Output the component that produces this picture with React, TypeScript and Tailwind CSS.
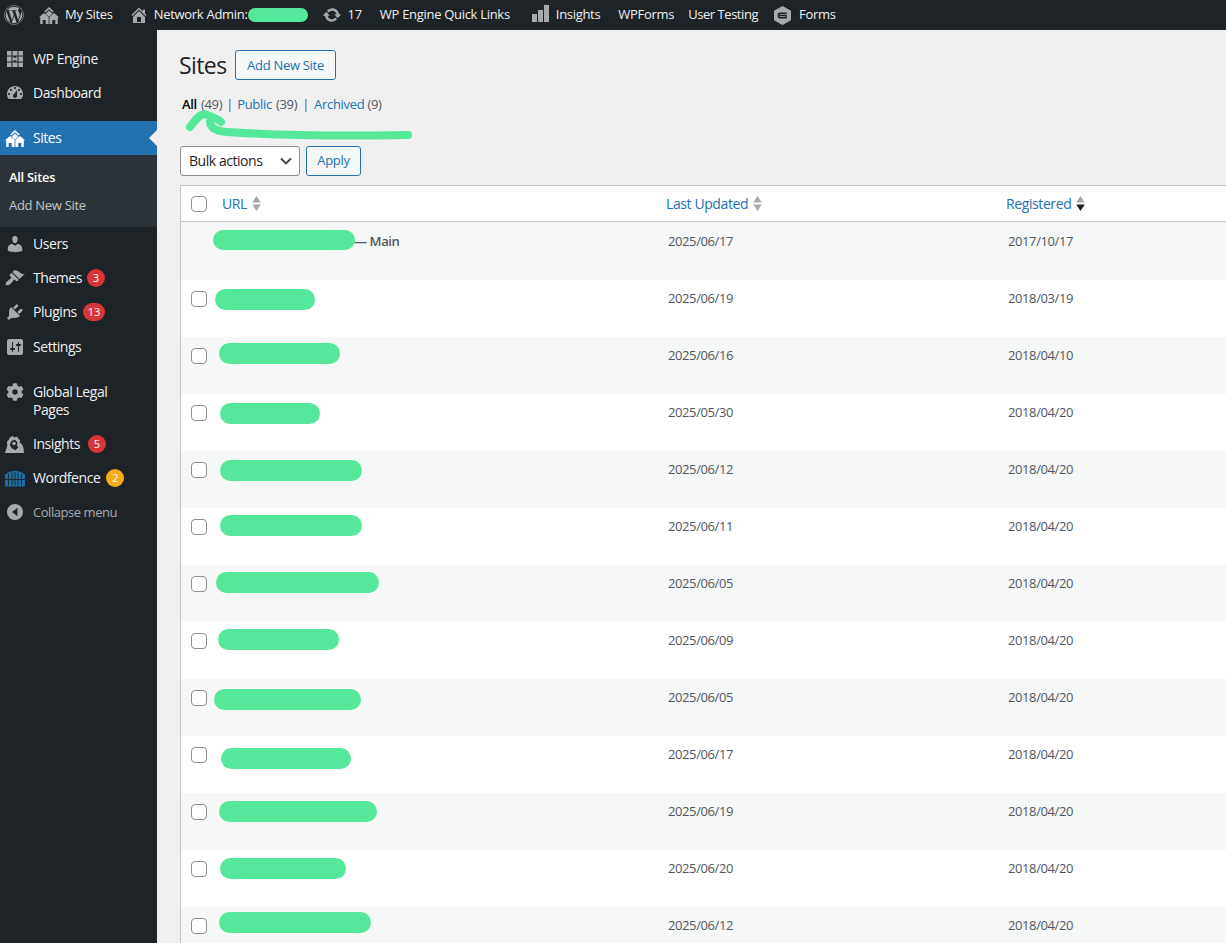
import { FaCog, FaWordpress } from "react-icons/fa";
import type { ReactNode } from "react";

const font = "font-['Open_Sans','Noto_Sans',sans-serif]";

function Dash({ d, className = "h-5 w-5" }: { d: string; className?: string }) {
  return (
    <svg viewBox="0 0 20 20" className={className} fill="currentColor">
      <path d={d} fillRule="evenodd" />
    </svg>
  );
}

const homePath = "M16 8.5l1.530 1.530-1.060 1.060L10 4.620l-6.470 6.470-1.060-1.060L10 2.500l4 4v-2h2v4zm-6-2.460l6 5.990V18H4v-5.970zM12 17v-5H8v5h4z";
const usersPath = "M10 9.250c-2.270 0-2.730-3.440-2.730-3.440C7 4.020 7.820 2 9.970 2c2.160 0 2.980 2.020 2.710 3.810 0 0-.410 3.440-2.680 3.440zm0 2.570L12.720 10c2.390 0 4.520 2.330 4.520 4.530v2.490s-3.650 1.130-7.240 1.130c-3.650 0-7.240-1.130-7.240-1.130v-2.490c0-2.250 1.940-4.480 4.470-4.480z";
const brushPath = "M14.480 11.060L7.410 3.990l1.500-1.500c.5-.56 2.300-.47 3.510.32 1.210.8 1.430 1.280 2.910 2.100 1.180.64 2.450 1.260 4.450.85zm-.71.71L6.700 4.700 4.930 6.470c-.39.39-.39 1.020 0 1.410l1.060 1.060c.39.39.39 1.030 0 1.420-.6.6-1.430 1.110-2.210 1.690-.35.26-.7.53-1.010.84C1.430 13.230 0 16 1 17c.99 1 3.860-.34 5.200-1.790.31-.31.58-.65.84-1 .58-.79 1.090-1.620 1.690-2.220.39-.39 1.020-.39 1.410 0l1.060 1.060c.39.39 1.020.39 1.410 0z";
const plugPath = "M13.110 4.360L9.870 7.600 8 5.730l3.240-3.240c.35-.34 1.050-.2 1.560.32.52.51.66 1.210.31 1.550zm-8 1.770l.91-1.120 9.010 9.010-1.190.84c-.71.71-2.630 1.160-3.820 1.160H6.140L4.900 17.260c-.59.59-1.540.59-2.120 0-.59-.58-.59-1.530 0-2.120l1.240-1.240v-3.880c0-1.130.4-3.190 1.090-3.890zm7.260 3.970l3.240-3.240c.34-.35 1.040-.21 1.550.31.52.51.66 1.210.31 1.550l-3.240 3.250z";
const dashboardPath = "M3.760 16h12.480c1.100-1.370 1.760-3.110 1.760-5 0-4.420-3.580-8-8-8s-8 3.580-8 8c0 1.890.66 3.630 1.760 5zM10 4c.55 0 1 .45 1 1s-.45 1-1 1-1-.45-1-1 .45-1 1-1zM6 6c.55 0 1 .45 1 1s-.45 1-1 1-1-.45-1-1 .45-1 1-1zm8 0c.55 0 1 .45 1 1s-.45 1-1 1-1-.45-1-1 .45-1 1-1zm-5.370 5.550L12 7v6c0 1.100-.9 2-2 2s-2-.9-2-2c0-.57.24-1.080.63-1.450zM4 10c.55 0 1 .45 1 1s-.45 1-1 1-1-.45-1-1 .45-1 1-1zm12 0c.55 0 1 .45 1 1s-.45 1-1 1-1-.45-1-1 .45-1 1-1z";
const settingsPath = "M18 16V4c0-1.100-.9-2-2-2H4c-1.100 0-2 .9-2 2v12c0 1.100.9 2 2 2h12c1.100 0 2-.9 2-2zM8 11h1c.55 0 1 .45 1 1s-.45 1-1 1H8v1.500c0 .28-.22.5-.5.5s-.5-.22-.5-.5V13H6c-.55 0-1-.45-1-1s.45-1 1-1h1V5.500c0-.28.22-.5.5-.5s.5.22.5.5V11zm5-2h-1c-.55 0-1-.45-1-1s.45-1 1-1h1V5.500c0-.28.22-.5.5-.5s.5.22.5.5V7h1c.55 0 1 .45 1 1s-.45 1-1 1h-1v5.500c0 .28-.22.5-.5.5s-.5-.22-.5-.5V9z";
const updatePath = "M10.200 3.280c3.530 0 6.430 2.610 6.920 6h2.080l-3.500 4-3.500-4h2.320c-.45-1.970-2.210-3.440-4.320-3.440-1.450 0-2.730.71-3.540 1.780L4.950 5.660C6.230 4.200 8.110 3.280 10.200 3.280zm-.4 13.440c-3.520 0-6.430-2.610-6.920-6H.8l3.500-4c1.170 1.330 2.330 2.670 3.500 4H5.480c.45 1.970 2.210 3.440 4.320 3.440 1.450 0 2.730-.71 3.540-1.780l1.710 1.950c-1.280 1.460-3.150 2.390-5.250 2.390z";

function SitesIcon({ className, cut }: { className: string; cut: string }) {
  return (
    <svg viewBox="0 0 20 17" className={className} fill="currentColor">
      <path d="M10 0 14.800 4.400 13.700 5.500 10 2.200 6.300 5.500 5.200 4.400Z" />
      <path d="M10 3.600 13.400 6.700 10 9.700 6.600 6.700Z" />
      <path d="M5 6 9.600 10 9.600 17H1.200V10.500L0 10.300Z" />
      <path d="M15 6 20 10.300 18.800 10.500V17H10.400V10Z" />
      <rect x="3.700" y="13" width="3" height="4" fill={cut} />
      <rect x="13.300" y="13" width="3" height="4" fill={cut} />
    </svg>
  );
}

function BarsIcon() {
  return (
    <svg viewBox="0 0 17 17" className="mb-[3px] h-[17px] w-[17px] text-[#a7aaad]" fill="currentColor">
      <rect x="0" y="9" width="5" height="8" />
      <rect x="6" y="5" width="5" height="12" />
      <rect x="12" y="0" width="5" height="17" />
    </svg>
  );
}

function FormsIcon() {
  return (
    <svg viewBox="0 0 18 20" className="h-[19px] w-[17px] text-[#a7aaad]" fill="currentColor">
      <path d="M9 0 18 5V15L9 20 0 15V5Z" />
      <path d="M5.500 6.800H13.500V8.400H6V9.300H13.500V13.200H5.500L4 11.800V8.200ZM6 10.800V11.600H12V10.800Z" fill="#1d2327" fillRule="evenodd" />
    </svg>
  );
}

function GridIcon() {
  return (
    <svg viewBox="0 0 16 16" className="h-4 w-4" fill="currentColor">
      <rect x="0" y="0" width="4.500" height="4.500" />
      <rect x="5.500" y="0" width="5" height="4.500" />
      <rect x="11.500" y="0" width="4.500" height="4.500" />
      <rect x="0" y="5.500" width="4.500" height="5" />
      <path d="M5.500 5.500h1.200v1.200h2.600V5.500h1.200v5H9.300V9.300H6.700v1.200H5.500Z" />
      <rect x="11.500" y="5.500" width="4.500" height="5" />
      <rect x="0" y="11.500" width="4.500" height="4.500" />
      <rect x="5.500" y="11.500" width="5" height="4.500" />
      <rect x="11.500" y="11.500" width="4.500" height="4.500" />
    </svg>
  );
}

function MonsterIcon() {
  return (
    <svg viewBox="0 0 20 20" className="h-[19px] w-[19px]" fill="currentColor">
      <path d="M8 1 10 2.500 13 1.500 14 4 16 5.500 15.500 8 18 10 19.500 14 20 19H0L1.500 14 2.500 11 2 7 4 5 5 2.500Z" />
      <path d="M7 6 10.500 5 13 7.500 12.500 11 14 13 11 16 7 14 5 10Z" fill="#1d2327" />
      <circle cx="9.500" cy="9" r="1.800" />
      <path d="M14 12.500 17 12 18 15 15 16Z" />
    </svg>
  );
}

function FenceIcon() {
  return (
    <svg viewBox="0 0 20 16" className="h-[17px] w-5 text-[#1d6d9e]" fill="currentColor">
      <path d="M0 4 4 1.500 10 0 16 1.500 20 4V16H0Z" />
      <path d="M3.500 3.500V15M7 2V15M10 1.500V15M13 2V15M16.500 3.500V15M0 9H20" stroke="#1d2327" strokeWidth="0.900" fill="none" />
    </svg>
  );
}

function CollapseIcon() {
  return (
    <svg viewBox="0 0 16 16" className="h-4 w-4" fill="currentColor">
      <path d="M8 0a8 8 0 1 1 0 16A8 8 0 0 1 8 0Zm2.500 3.800L5 8l5.500 4.200Z" fillRule="evenodd" />
    </svg>
  );
}

function SortArrows({ active }: { active?: boolean }) {
  return (
    <svg viewBox="0 0 8 14" className="h-[15px] w-[9px]">
      <path d="M4 0 8 6H0Z" fill="#a7aaad" />
      <path d="M0 8H8L4 14Z" fill={active ? "#1d2327" : "#a7aaad"} />
    </svg>
  );
}

function Blob({ className }: { className: string }) {
  return <span className={`block rounded-full bg-[#55e89b] ${className}`} />;
}

type MenuItem = { label: ReactNode; icon: ReactNode; badge?: string; badgeClass?: string; textClass?: string; rowClass?: string };

const firstMenu: MenuItem[] = [
  { label: "Users", icon: <Dash d={usersPath} /> },
  { label: "Themes", icon: <Dash d={brushPath} />, badge: "3", badgeClass: "ml-[5px] bg-[#d63638]" },
  { label: "Plugins", icon: <Dash d={plugPath} />, badge: "13", badgeClass: "ml-[6px] bg-[#d63638]" },
  { label: "Settings", icon: <Dash d={settingsPath} />, rowClass: "mt-px" },
];

const secondMenu: MenuItem[] = [
  { label: "Insights", icon: <MonsterIcon />, badge: "5", badgeClass: "ml-[8px] bg-[#d63638]" },
  { label: "Wordfence", icon: <FenceIcon />, badge: "2", badgeClass: "ml-[6px] bg-[#f5ad17]" },
  { label: "Collapse menu", icon: <CollapseIcon />, textClass: "text-[#a7aaad] text-[13px] pt-[2px]" },
];

function MenuRow({ item }: { item: MenuItem }) {
  return (
    <div className={`flex h-[34px] items-center ${item.rowClass ?? ""}`}>
      <span className="flex w-[33px] shrink-0 items-center justify-center pr-[4px] text-[#a7aaad]">{item.icon}</span>
      <span className={`tracking-[-0.45px] ${item.textClass ?? "pb-[2px] text-[#f0f0f1] text-[14px]"}`}>{item.label}</span>
      {item.badge && (
        <span className={`flex h-[18px] min-w-[18px] items-center justify-center rounded-full px-[5px] text-[11px] text-white ${item.badgeClass}`}>
          {item.badge}
        </span>
      )}
    </div>
  );
}

const rows = [
  { updated: "2025/06/19", registered: "2018/03/19", blob: "mt-[9px] ml-[2px] w-[100px] h-[21px]" },
  { updated: "2025/06/16", registered: "2018/04/10", blob: "mt-[6px] ml-[6px] w-[121px] h-[21px]" },
  { updated: "2025/05/30", registered: "2018/04/20", blob: "mt-[9px] ml-[7px] w-[100px] h-[21px]" },
  { updated: "2025/06/12", registered: "2018/04/20", blob: "mt-[9px] ml-[7px] w-[142px] h-[21px]" },
  { updated: "2025/06/11", registered: "2018/04/20", blob: "mt-[7px] ml-[7px] w-[142px] h-[21px]" },
  { updated: "2025/06/05", registered: "2018/04/20", blob: "mt-[7px] ml-[3px] w-[163px] h-[21px]" },
  { updated: "2025/06/09", registered: "2018/04/20", blob: "mt-[7px] ml-[5px] w-[121px] h-[21px]" },
  { updated: "2025/06/05", registered: "2018/04/20", blob: "mt-[10px] ml-[1px] w-[147px] h-[21px]" },
  { updated: "2025/06/17", registered: "2018/04/20", blob: "mt-[12px] ml-[8px] w-[130px] h-[21px]" },
  { updated: "2025/06/19", registered: "2018/04/20", blob: "mt-[8px] ml-[6px] w-[158px] h-[21px]" },
  { updated: "2025/06/20", registered: "2018/04/20", blob: "mt-[8px] ml-[7px] w-[126px] h-[21px]" },
  { updated: "2025/06/12", registered: "2018/04/20", blob: "mt-[5px] ml-[6px] w-[152px] h-[21px]" },
];

function TopBar() {
  return (
    <header className="flex h-[30px] shrink-0 items-center bg-[#1d2327] text-[13px] tracking-[-0.3px] text-[#f0f0f1]">
      <FaWordpress className="ml-1 h-5 w-5 text-[#a7aaad]" />
      <SitesIcon className="ml-[15px] h-[17px] w-5 text-[#a7aaad]" cut="#1d2327" />
      <span className="ml-[6px]">My Sites</span>
      <span className="ml-[16px] text-[#a7aaad]"><Dash d={homePath} /></span>
      <span className="ml-[5px]">Network Admin:</span>
      <Blob className="h-[14px] w-[60px]" />
      <span className="ml-[14px] text-[#a7aaad]"><Dash d={updatePath} /></span>
      <span className="ml-[6px]">17</span>
      <span className="ml-[18px]">WP Engine Quick Links</span>
      <span className="ml-[22px]"><BarsIcon /></span>
      <span className="ml-[7px]">Insights</span>
      <span className="ml-[18px]">WPForms</span>
      <span className="ml-[14px] tracking-[-0.45px]">User Testing</span>
      <span className="ml-4"><FormsIcon /></span>
      <span className="ml-2">Forms</span>
    </header>
  );
}

function Sidebar() {
  return (
    <aside className="w-[157px] shrink-0 bg-[#1d2327] pt-3">
      <MenuRow item={{ label: "WP Engine", icon: <GridIcon /> }} />
      <MenuRow item={{ label: "Dashboard", icon: <Dash d={dashboardPath} /> }} />
      <div className="relative mt-[11px] flex h-[34px] items-center bg-[#2271b1]">
        <span className="flex w-[33px] shrink-0 items-center justify-center pr-[4px] text-white">
          <SitesIcon className="h-[17px] w-5" cut="#2271b1" />
        </span>
        <span className="pb-[2px] text-[14px] tracking-[-0.45px] text-white">Sites</span>
        <span className="absolute right-0 top-[9px] h-0 w-0 border-y-[8px] border-r-[8px] border-y-transparent border-r-[#f0f0f1]" />
      </div>
      <div className="flex h-[72px] flex-col justify-center gap-[8px] bg-[#2c3338] pl-[9px] pt-px text-[13px] tracking-[-0.3px]">
        <span className="font-semibold text-white">All Sites</span>
        <span className="text-[#c3c4c7]">Add New Site</span>
      </div>
      {firstMenu.map((item, i) => (
        <MenuRow key={i} item={item} />
      ))}
      <div className="mt-[11px] flex h-[52px] items-start">
        <span className="flex h-[34px] w-[33px] shrink-0 items-center justify-center pr-[4px] text-[#a7aaad]">
          <FaCog className="h-[18px] w-[18px]" />
        </span>
        <span className="mt-[8px] text-[14px] leading-[18px] tracking-[-0.45px] text-[#f0f0f1]">
          Global Legal
          <br />
          Pages
        </span>
      </div>
      {secondMenu.map((item, i) => (
        <MenuRow key={i} item={item} />
      ))}
    </aside>
  );
}

function SitesTable() {
  return (
    <div className="mt-[9px] w-[1100px] border border-[#c3c4c7] bg-white text-[13px] tracking-[-0.4px]">
      <div className="flex h-[36px] items-center border-b border-[#c3c4c7] text-[14px] tracking-[-0.4px] text-[#2271b1]">
        <span className="flex w-[41px] shrink-0 pl-[10px] pt-[2px]">
          <span className="block h-4 w-4 rounded-[4px] border border-[#8c8f94] bg-white" />
        </span>
        <span className="flex w-[436px] shrink-0 items-center gap-[5px]"><span className="pt-px">URL</span> <SortArrows /></span>
        <span className="flex w-[340px] shrink-0 items-center gap-[5px] pl-[8px]"><span className="pt-px">Last Updated</span> <SortArrows /></span>
        <span className="flex shrink-0 items-center gap-[5px] pl-[8px]"><span className="pt-px">Registered</span> <SortArrows active /></span>
      </div>
      <div className="flex h-[58px] bg-[#f6f7f7] text-[#50575e]">
        <span className="w-[32px] shrink-0" />
        <div className="flex w-[445px] shrink-0 items-start">
          <Blob className="mt-[8px] h-[20px] w-[142px]" />
          <span className="-ml-px mt-[10px] font-semibold text-[#50575e]">— Main</span>
        </div>
        <span className="mt-[10px] w-[340px] shrink-0 pl-[10px]">2025/06/17</span>
        <span className="mt-[10px] pl-[10px]">2017/10/17</span>
      </div>
      {rows.map((row, i) => (
        <div key={i} className={`flex h-[57px] text-[#50575e] ${i % 2 === 1 ? "bg-[#f6f7f7]" : "bg-white"}`}>
          <span className="flex w-[32px] shrink-0 pl-[10px]">
            <span className="mt-[11px] block h-4 w-4 shrink-0 rounded-[4px] border border-[#8c8f94] bg-white" />
          </span>
          <div className="w-[445px] shrink-0">
            <Blob className={row.blob} />
          </div>
          <span className="mt-[9px] w-[340px] shrink-0 pl-[10px]">{row.updated}</span>
          <span className="mt-[9px] pl-[10px]">{row.registered}</span>
        </div>
      ))}
    </div>
  );
}

export default function App() {
  return (
    <div className={`flex h-[943px] w-[1226px] flex-col overflow-hidden bg-[#f0f0f1] ${font}`}>
      <TopBar />
      <div className="flex min-h-0 flex-1">
        <Sidebar />
        <main className="relative min-w-0 flex-1 pl-[23px] pt-5 text-[#3c434a]">
          <div className="flex items-center gap-[7px]">
            <h1 className="-ml-px w-[49px] text-[23px] leading-[30px] tracking-[-0.6px] text-[#1d2327]">Sites</h1>
            <span className="flex h-[30px] w-[101px] items-center justify-center rounded-[3px] border border-[#2271b1] bg-[#f6f7f7] pt-[2px] text-[13px] tracking-[-0.3px] text-[#2271b1]">Add New Site</span>
          </div>
          <div className="ml-[2px] mt-[15px] flex items-center text-[13px] tracking-[-0.3px] text-[#50575e]">
            <span className="font-semibold text-black">All</span>
            <span className="ml-1">(49)</span>
            <span className="mx-[4px]">|</span>
            <span className="text-[#2271b1]">Public</span>
            <span className="ml-1">(39)</span>
            <span className="mx-[5px]">|</span>
            <span className="text-[#2271b1]">Archived</span>
            <span className="ml-[3px]">(9)</span>
          </div>
          <div className="mt-[31px] flex gap-[6px]">
            <span className="flex h-[30px] w-[120px] items-center justify-between rounded-[3px] border border-[#8c8f94] bg-white pl-2 pr-[7px] text-[14px] tracking-[-0.45px] text-[#1d2327]">
              Bulk actions
              <svg viewBox="0 0 12 8" className="h-2 w-3" fill="none" stroke="#3c434a" strokeWidth="1.800"><path d="M1 1.500 6 6.500 11 1.500" /></svg>
            </span>
            <span className="flex h-[30px] w-[55px] items-center justify-center rounded-[3px] border border-[#2271b1] bg-[#f6f7f7] text-[13px] tracking-[-0.3px] text-[#2271b1]">Apply</span>
          </div>
          <SitesTable />
          {/* hand-drawn arrow over the filter links */}
          <svg className="pointer-events-none absolute left-0 top-0 h-[150px] w-[300px]" viewBox="0 0 300 150" fill="none" stroke="#55e89b" strokeWidth="8" strokeLinecap="round" strokeLinejoin="round">
            <path d="M251 105C200 106 130 106 70 102C58 101 54 98 53 92" />
            <path d="M33 97C38 90 42 85 47 84C54 86 60 88 64 92" />
          </svg>
        </main>
      </div>
    </div>
  );
}
